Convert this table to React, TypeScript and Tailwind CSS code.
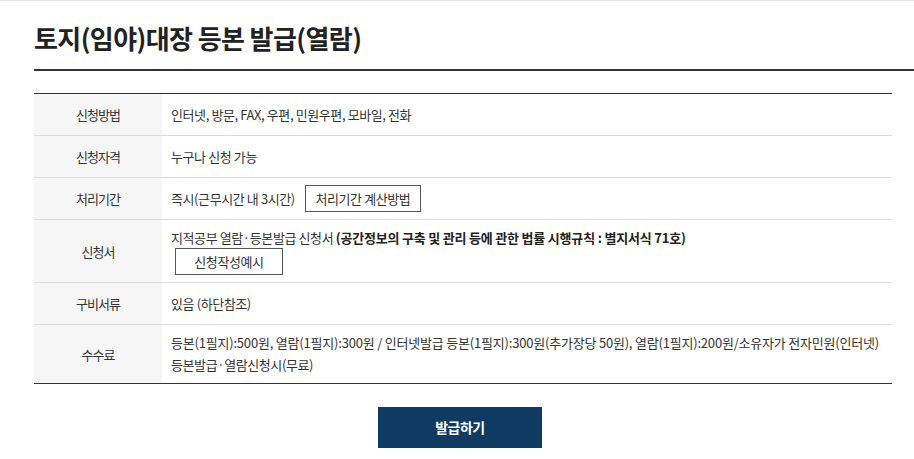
const rows = [
  { label: "신청방법", body: <>인터넷, 방문, FAX, 우편, 민원우편, 모바일, 전화</> },
  { label: "신청자격", body: <>누구나 신청 가능</> },
  {
    label: "처리기간",
    body: (
      <div className="flex items-center gap-[10px]">
        <span>즉시(근무시간 내 3시간)</span>
        <button className="w-[116px] h-[27px] border border-[#555] bg-white text-[#333] flex items-center justify-center">
          처리기간 계산방법
        </button>
      </div>
    ),
  },
  {
    label: "신청서",
    body: (
      <div>
        <p>
          지적공부 열람·등본발급 신청서{" "}
          <b className="font-bold text-[#222] tracking-[-0.2px]">(공간정보의 구축 및 관리 등에 관한 법률 시행규칙 : 별지서식 71호)</b>
        </p>
        <button className="ml-[4px] w-[108px] h-[27px] border border-[#555] bg-white text-[#333] flex items-center justify-center">
          신청작성예시
        </button>
      </div>
    ),
  },
  { label: "구비서류", body: <>있음 (하단참조)</> },
  {
    label: "수수료",
    body: (
      <div className="leading-[22px]">
        <p className="whitespace-nowrap tracking-[-0.2px]">
          등본(1필지):500원, 열람(1필지):300원 / 인터넷발급 등본(1필지):300원(추가장당 50원), 열람(1필지):200원/소유자가 전자민원(인터넷)
        </p>
        <p>등본발급·열람신청시(무료)</p>
      </div>
    ),
  },
];

export default function App() {
  return (
    <div
      className="min-h-[459px] bg-white border-t border-[#e5e5e5] pl-[34px] text-[#333]"
      style={{ fontFamily: '"Noto Sans CJK KR", "Noto Sans", sans-serif' }}
    >
      <h2 className="pt-[20px] pb-[14px] text-[26px] leading-[34px] font-bold tracking-[-0.6px] text-[#222] border-b-2 border-[#333]">
        토지(임야)대장 등본 발급(열람)
      </h2>

      <table className="mt-[22px] w-[858px] border-collapse border-t border-b border-[#333] text-[13px] leading-[21px]">
        <tbody>
          {rows.map((r, i) => (
            <tr key={r.label} className={i < rows.length - 1 ? "border-b border-[#ddd]" : ""}>
              <th className="w-[128px] h-[42px] bg-[#f6f6f6] font-normal text-center tracking-[-1px] py-[7px]">
                {r.label}
              </th>
              <td className="h-[42px] pl-[9px] pr-[8px] py-[7px] text-left tracking-[-0.4px]">{r.body}</td>
            </tr>
          ))}
        </tbody>
      </table>

      <div className="flex justify-center w-[852px] mt-[23px]">
        <button className="w-[164px] h-[41px] bg-[#0f3a62] text-white text-[14px] font-bold tracking-[-0.5px]">
          발급하기
        </button>
      </div>
    </div>
  );
}
